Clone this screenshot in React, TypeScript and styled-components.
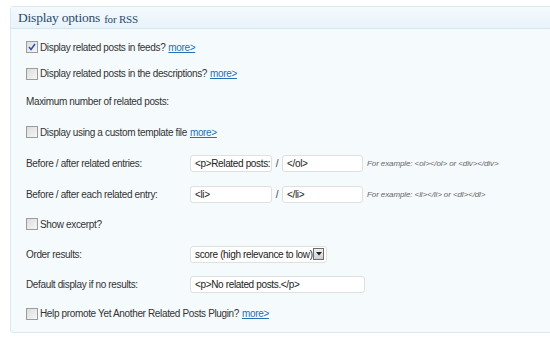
import styled, { createGlobalStyle } from "styled-components";

const GlobalStyle = createGlobalStyle`
  html, body {
    margin: 0;
    padding: 0;
    background: #ffffff;
  }
  body {
    font-family: "Liberation Sans", Arial, sans-serif;
    font-size: 10px;
    letter-spacing: -0.35px;
    color: #333;
  }
`;

const Page = styled.div`
  width: 550px;
  height: 340px;
  padding: 6px 0 0 10px;
  box-sizing: border-box;
  overflow: hidden;
`;

const Panel = styled.div`
  width: 560px;
  border: 1px solid #d9e8f1;
  border-right: none;
  border-radius: 4px 0 0 4px;
  background: #f5fafd;
`;

const PanelHeader = styled.div`
  height: 21px;
  display: flex;
  align-items: center;
  padding: 0 7px;
  border-bottom: 1px solid #d3e6ef;
  background: linear-gradient(#f4f9fd, #e9f3fb);
  font-family: "Liberation Serif", "DejaVu Serif", serif;
  font-size: 13.5px;
  letter-spacing: -0.2px;
  color: #2a4b6a;
`;

const HeaderSmall = styled.span`
  font-size: 11px;
  margin-left: 4px;
  margin-top: 2px;
`;

const Body = styled.div`
  padding: 5px 0 4px 15px;
`;

const Row = styled.div<{ $h: number }>`
  height: ${(p) => p.$h}px;
  display: flex;
  align-items: center;
`;

const Label = styled.div`
  width: 164px;
  flex: none;
`;

const CheckLabel = styled.label`
  display: flex;
  align-items: center;
  gap: 2px;
`;

const Box = styled.span`
  width: 10px;
  height: 10px;
  border: 1px solid #9c9c9c;
  background: linear-gradient(135deg, #dcdcdc, #f6f6f6);
  display: flex;
  align-items: center;
  justify-content: center;
  flex: none;
`;

const More = styled.a`
  color: #2470b3;
  text-decoration: underline;
  margin-left: 1px;
`;

const Field = styled.div<{ $w: number }>`
  width: ${(p) => p.$w}px;
  height: 17px;
  box-sizing: border-box;
  border: 1px solid #e0e0e0;
  border-radius: 3px;
  background: #fff;
  display: flex;
  align-items: center;
  padding: 0 4px;
  color: #222;
  white-space: nowrap;
  overflow: hidden;
  flex: none;
`;

const Slash = styled.span`
  width: 10px;
  text-align: center;
  color: #444;
`;

const Hint = styled.span`
  font-style: italic;
  font-size: 8px;
  letter-spacing: -0.1px;
  color: #666;
  margin-left: 4px;
`;

const Select = styled(Field)`
  padding: 0 2px 0 4px;
  justify-content: space-between;
`;

const Arrow = styled.span`
  width: 11px;
  height: 12px;
  flex: none;
  box-sizing: border-box;
  border: 1px solid #6e6e6e;
  background: linear-gradient(#f0f0f0, #cfcfcf);
  display: flex;
  align-items: center;
  justify-content: center;
`;

const Check = ({ checked }: { checked?: boolean }) => (
  <Box>
    {checked && (
      <svg width="8" height="8" viewBox="0 0 8 8">
        <path d="M1 4 L3 6.5 L7 1" fill="none" stroke="#2c50a8" strokeWidth="1.5" />
      </svg>
    )}
  </Box>
);

const CheckRow = ({ h, text, checked, more }: { h: number; text: string; checked?: boolean; more?: boolean }) => (
  <Row $h={h}>
    <CheckLabel>
      <Check checked={checked} />
      <span>{text}</span>
      {more && <More>more&gt;</More>}
    </CheckLabel>
  </Row>
);

export default function App() {
  return (
    <>
      <GlobalStyle />
      <Page>
        <Panel>
          <PanelHeader>
            Display options<HeaderSmall>for RSS</HeaderSmall>
          </PanelHeader>
          <Body>
            <CheckRow h={26} checked text="Display related posts in feeds?" more />
            <CheckRow h={27} text="Display related posts in the descriptions?" more />
            <Row $h={29}>
              <Label>Maximum number of related posts:</Label>
            </Row>
            <CheckRow h={32} text="Display using a custom template file" more />
            <Row $h={31}>
              <Label>Before / after related entries:</Label>
              <Field $w={82}>&lt;p&gt;Related posts:</Field>
              <Slash>/</Slash>
              <Field $w={81}>&lt;/ol&gt;</Field>
              <Hint>For example: &lt;ol&gt;&lt;/ol&gt; or &lt;div&gt;&lt;/div&gt;</Hint>
            </Row>
            <Row $h={30}>
              <Label>Before / after each related entry:</Label>
              <Field $w={82}>&lt;li&gt;</Field>
              <Slash>/</Slash>
              <Field $w={81}>&lt;/li&gt;</Field>
              <Hint>For example: &lt;li&gt;&lt;/li&gt; or &lt;dl&gt;&lt;/dl&gt;</Hint>
            </Row>
            <CheckRow h={30} text="Show excerpt?" />
            <Row $h={30}>
              <Label>Order results:</Label>
              <Select $w={137}>
                <span>score (high relevance to low)</span>
                <Arrow>
                  <svg width="6" height="4" viewBox="0 0 6 4">
                    <path d="M0 0 H6 L3 3.5 Z" fill="#222" />
                  </svg>
                </Arrow>
              </Select>
            </Row>
            <Row $h={30}>
              <Label>Default display if no results:</Label>
              <Field $w={175}>&lt;p&gt;No related posts.&lt;/p&gt;</Field>
            </Row>
            <CheckRow h={29} text="Help promote Yet Another Related Posts Plugin?" more />
          </Body>
        </Panel>
      </Page>
    </>
  );
}
